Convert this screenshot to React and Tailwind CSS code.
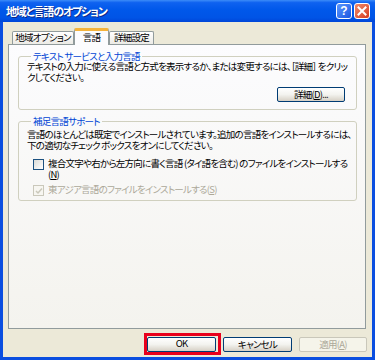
import React from 'react'

const FONT = "font-['Noto_Sans_CJK_JP',sans-serif] [font-feature-settings:'palt']"
const TXT = 'text-[9.5px] tracking-[-0.75px]'

function XpButton({ children, className = '', disabled = false }) {
  return (
    <div
      className={`h-[15px] flex items-center justify-center rounded-[2px] border ${TXT} leading-none ${
        disabled
          ? 'border-[#c9c7ba] bg-[#f5f4ea] text-[#aca899]'
          : 'border-[#003c74] bg-gradient-to-b from-[#ffffff] via-[#f3f3ef] to-[#d6d0c5] text-black'
      } ${className}`}
    >
      {children}
    </div>
  )
}

function GroupBox({ label, className = '', children }) {
  return (
    <fieldset className={`min-w-0 border border-[#d0d0bf] rounded-[3px] mr-[8px] ml-[9px] ${className}`}>
      <legend className={`ml-[4px] px-[2px] ${TXT} leading-[11px] text-[#0046d5]`}>{label}</legend>
      {children}
    </fieldset>
  )
}

function Checkbox({ checked, disabled }) {
  return (
    <div
      className={`w-[11px] h-[11px] shrink-0 border flex items-center justify-center ${
        disabled ? 'border-[#cac8bb] bg-[#f7f6f1]' : 'border-[#1c5180] bg-gradient-to-br from-[#dcdcd7] to-[#ffffff]'
      }`}
    >
      {checked && (
        <svg width="8" height="8" viewBox="0 0 8 8">
          <path d="M1 4 L3 6 L7 1.5" fill="none" stroke={disabled ? '#cac8bb' : '#21a121'} strokeWidth="1.5" />
        </svg>
      )}
    </div>
  )
}

export default function App() {
  return (
    <div className={`w-[375px] h-[360px] flex flex-col bg-[#0a4ee0] ${FONT}`}>
      {/* title bar */}
      <div className="h-[22px] shrink-0 flex items-center pl-[6px] pr-[5px] bg-[linear-gradient(to_bottom,#3c8cf8_0%,#0f62f0_12%,#0058ea_45%,#0054e6_80%,#0046d8_100%)]">
        <span className="text-white font-bold text-[11px] tracking-[-1.2px] leading-none whitespace-nowrap [text-shadow:1px_1px_0_#0a2a8a]">
          地域と言語のオプション
        </span>
        <div className="ml-auto flex gap-[2px]">
          <div className="w-[16px] h-[16px] rounded-[3px] border border-white bg-gradient-to-br from-[#5b97ff] to-[#1c55e0] flex items-center justify-center text-white font-bold text-[12px] leading-none font-['Liberation_Sans',sans-serif]">
            ?
          </div>
          <div className="w-[16px] h-[16px] rounded-[3px] border border-white bg-gradient-to-br from-[#f08a6a] to-[#d5381a] flex items-center justify-center">
            <svg width="10" height="10" viewBox="0 0 10 10">
              <path d="M1.5 1.5 L8.5 8.5 M8.5 1.5 L1.5 8.5" stroke="white" strokeWidth="2" strokeLinecap="square" />
            </svg>
          </div>
        </div>
      </div>

      {/* body */}
      <div className="flex-1 mx-[3px] mb-[3px] bg-[#ece9d8] flex flex-col">
        {/* tabs */}
        <div className="h-[22px] flex items-end pl-[7px] pr-[6px]">
          <div className={`ml-[2px] flex items-end ${TXT} leading-none`}>
            <div className="w-[62px] h-[13px] border border-b-0 border-[#919b9c] rounded-t-[2px] bg-gradient-to-b from-[#ffffff] to-[#ecebe6] flex items-center justify-center whitespace-nowrap">
              地域オプション
            </div>
            <div className="w-[35px] h-[17px] -mb-px relative z-10 border border-b-0 border-[#919b9c] border-t-[3px] border-t-[#f5b33b] rounded-t-[2px] bg-[#fcfcfe] flex items-center justify-center">
              言語
            </div>
            <div className="w-[45px] h-[13px] border border-b-0 border-[#919b9c] rounded-t-[2px] bg-gradient-to-b from-[#ffffff] to-[#ecebe6] flex items-center justify-center whitespace-nowrap">
              詳細設定
            </div>
          </div>
        </div>

        {/* panel */}
        <div className="ml-[5px] mr-[6px] h-[285px] border border-[#919b9c] bg-gradient-to-b from-[#fcfcfe] to-[#f4f3ee] pt-[6px]">
          <GroupBox label="テキスト サービスと入力言語" className="h-[59px] pl-[8px] pr-[11px]">
            <p className={`${TXT} leading-[11px] mt-[-1px] whitespace-nowrap`}>
              テキストの入力に使える言語と方式を表示するか、または変更するには、［詳細］ をクリッ
              <br />
              クしてください。
            </p>
            <div className="flex justify-end mt-[4px]">
              <XpButton className="w-[68px] h-[13px]">詳細(<span className="underline">D</span>)...</XpButton>
            </div>
          </GroupBox>

          <GroupBox label="補足言語サポート" className="h-[85px] mt-[6px] pl-[8px] pr-[8px]">
            <p className={`${TXT} leading-[11px] mt-[2px] whitespace-nowrap`}>
              言語のほとんどは既定でインストールされています。追加の言語をインストールするには、
              <br />
              下の適切なチェック ボックスをオンにしてください。
            </p>
            <div className={`flex mt-[8px] ml-[6px] gap-[4px] ${TXT} leading-[11px]`}>
              <Checkbox />
              <div className="whitespace-nowrap -mt-[1px]">
                複合文字や右から左方向に書く言語 (タイ語を含む) のファイルをインストールする
                <br />
                (<span className="underline">N</span>)
              </div>
            </div>
            <div className={`flex mt-[5px] ml-[6px] gap-[4px] ${TXT} leading-[11px] text-[#aca899]`}>
              <Checkbox checked disabled />
              <div className="whitespace-nowrap -mt-[1px]">
                東アジア言語のファイルをインストールする(<span className="underline">S</span>)
              </div>
            </div>
          </GroupBox>
        </div>

        {/* footer buttons */}
        <div className="flex justify-end items-start pr-[5px]">
          <div className="mt-[4px] w-[77px] h-[22px] border-[3px] border-[#e8001c] flex items-center pl-0 pr-[2px]">
            <XpButton className="w-[69px]">OK</XpButton>
          </div>
          <XpButton className="ml-[2px] mt-[8px] w-[69px]">キャンセル</XpButton>
          <XpButton disabled className="ml-[7px] mt-[8px] w-[68px]">
            適用(<span className="underline">A</span>)
          </XpButton>
        </div>
      </div>
    </div>
  )
}
